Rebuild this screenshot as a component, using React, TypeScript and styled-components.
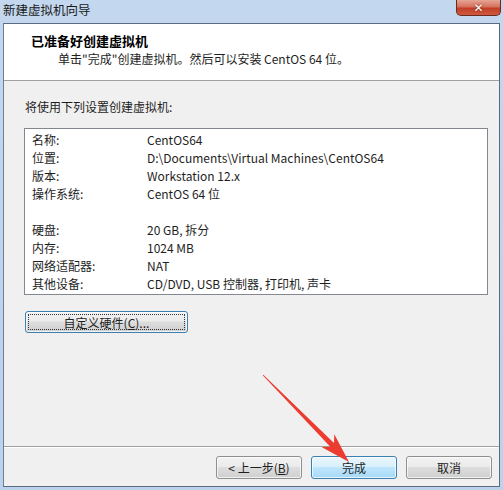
import React from "react";
import styled, { createGlobalStyle } from "styled-components";

const Global = createGlobalStyle`
  html, body { margin: 0; padding: 0; background: #bfd4ec; }
  body { width: 503px; height: 490px; overflow: hidden; }
  * { box-sizing: border-box; }
`;

const FONT = `"Segoe UI", "Noto Sans CJK SC", "Noto Sans", sans-serif`;

const Window = styled.div`
  position: relative;
  width: 503px;
  height: 490px;
  background: linear-gradient(180deg, #c3d7ee 0%, #bcd1ea 100%);
  display: flex;
  flex-direction: column;
  font-family: ${FONT};
  font-size: 12px;
  color: #1e1e1e;
  padding: 0 3px 3px 3px;
`;

const TitleBar = styled.div`
  height: 23px;
  display: flex;
  align-items: flex-start;
  justify-content: space-between;
`;

const TitleText = styled.div`
  line-height: 20px;
  color: #1a1a1a;
  font-size: 12.5px;
`;

const CloseBtn = styled.div`
  width: 45px;
  height: 16px;
  margin-right: -1px;
  border: 1px solid #6b2a1f;
  border-top: none;
  border-radius: 0 0 5px 5px;
  background: linear-gradient(180deg, #e7a595 0%, #d4715d 45%, #c13e27 55%, #cf5a3f 100%);
  display: flex;
  align-items: center;
  justify-content: center;
  color: #fff;
  font-family: "DejaVu Sans", sans-serif;
  font-weight: bold;
  font-size: 12px;
  line-height: 1;
  text-shadow: 0 0 2px #6b1a10;
`;

const Client = styled.div`
  flex: 1;
  display: flex;
  flex-direction: column;
  background: #f0f0f0;
  border: 1px solid #5a6a82;
  border-left-color: #6d7f98;
`;

const Header = styled.div`
  height: 57px;
  background: #fff;
  border-bottom: 1px solid #a0a0a0;
  padding: 8px 0 0 27px;
`;

const HeaderTitle = styled.div`
  font-weight: bold;
  font-size: 13px;
  line-height: 18px;
  color: #000;
`;

const HeaderSub = styled.div`
  line-height: 18px;
  padding-left: 27px;
`;

const Body = styled.div`
  flex: 1;
  padding: 17px 11px 0 20px;
  display: flex;
  flex-direction: column;
  align-items: flex-start;
`;

const Intro = styled.div`
  line-height: 18px;
  padding-left: 1px;
`;

const ListBox = styled.div`
  margin-top: 12px;
  align-self: stretch;
  background: #fff;
  border: 1px solid #828790;
  padding: 2px 0 1px 7px;
`;

const Row = styled.div`
  display: grid;
  grid-template-columns: 115px 1fr;
  height: 18px;
  line-height: 18px;
  white-space: nowrap;
`;

const Cell = styled.span``;

const Button = styled.div<{ $variant?: "focus" | "default" }>`
  height: 23px;
  display: flex;
  align-items: center;
  justify-content: center;
  border-radius: 3px;
  border: 1px solid ${(p) => (p.$variant ? "#3c7fb1" : "#8e8f8f")};
  background: ${(p) =>
    p.$variant === "default"
      ? "linear-gradient(180deg, #eaf6fd 0%, #d9f0fc 45%, #bee6fd 50%, #a7d9f5 100%)"
      : "linear-gradient(180deg, #f2f2f2 0%, #ebebeb 45%, #dddddd 50%, #cfcfcf 100%)"};
  box-shadow: inset 0 0 0 1px rgba(255, 255, 255, 0.7);
  color: #1e1e1e;
  position: relative;
`;

const FocusRing = styled.span`
  position: absolute;
  inset: 2px;
  border: 1px dotted #333;
  border-radius: 1px;
`;

const CustomButton = styled(Button)`
  margin-top: 16px;
  margin-left: 1px;
  width: 163px;
  height: 22px;
`;

const Separator = styled.div`
  height: 2px;
  border-top: 1px solid #a0a0a0;
  border-bottom: 1px solid #ffffff;
`;

const Footer = styled.div`
  display: flex;
  justify-content: flex-end;
  gap: 9px;
  padding: 8px 7px 7px 0;
`;

const FooterButton = styled(Button)`
  width: 86px;
`;

const ArrowLayer = styled.svg`
  position: absolute;
  left: 0;
  top: 0;
  pointer-events: none;
`;

function arrowPoints(x1: number, y1: number, x2: number, y2: number) {
  const dx = x2 - x1;
  const dy = y2 - y1;
  const len = Math.hypot(dx, dy);
  const ux = dx / len;
  const uy = dy / len;
  const px = -uy;
  const py = ux;
  const headLen = 30;
  const headW = 9;
  const shaftW = 2.6;
  const bx = x2 - ux * headLen;
  const by = y2 - uy * headLen;
  const nx = x2 - ux * (headLen - 6);
  const ny = y2 - uy * (headLen - 6);
  const pts = [
    [x1 + px * 0.4, y1 + py * 0.4],
    [nx + px * shaftW, ny + py * shaftW],
    [bx + px * headW, by + py * headW],
    [x2, y2],
    [bx - px * headW, by - py * headW],
    [nx - px * shaftW, ny - py * shaftW],
    [x1 - px * 0.4, y1 - py * 0.4],
  ];
  return pts.map((p) => p.map((v) => v.toFixed(1)).join(",")).join(" ");
}

const rows: Array<[string, string] | null> = [
  ["名称:", "CentOS64"],
  ["位置:", "D:\\Documents\\Virtual Machines\\CentOS64"],
  ["版本:", "Workstation 12.x"],
  ["操作系统:", "CentOS 64 位"],
  null,
  ["硬盘:", "20 GB, 拆分"],
  ["内存:", "1024 MB"],
  ["网络适配器:", "NAT"],
  ["其他设备:", "CD/DVD, USB 控制器, 打印机, 声卡"],
];

export default function App() {
  return (
    <>
      <Global />
      <Window>
        <TitleBar>
          <TitleText>新建虚拟机向导</TitleText>
          <CloseBtn>✕</CloseBtn>
        </TitleBar>
        <Client>
          <Header>
            <HeaderTitle>已准备好创建虚拟机</HeaderTitle>
            <HeaderSub>单击"完成"创建虚拟机。然后可以安装 CentOS 64 位。</HeaderSub>
          </Header>
          <Body>
            <Intro>将使用下列设置创建虚拟机:</Intro>
            <ListBox>
              {rows.map((r, i) => (
                <Row key={i}>
                  <Cell>{r ? r[0] : ""}</Cell>
                  <Cell>{r ? r[1] : ""}</Cell>
                </Row>
              ))}
            </ListBox>
            <CustomButton $variant="focus">
              <FocusRing />
              自定义硬件(<u>C</u>)...
            </CustomButton>
          </Body>
          <Separator />
          <Footer>
            <FooterButton>&lt; 上一步(<u>B</u>)</FooterButton>
            <FooterButton $variant="default">完成</FooterButton>
            <FooterButton>取消</FooterButton>
          </Footer>
        </Client>
        <ArrowLayer width={503} height={490} viewBox="0 0 503 490">
          <polygon points={arrowPoints(263, 375, 349, 462)} fill="#ec3b2f" />
        </ArrowLayer>
      </Window>
    </>
  );
}
